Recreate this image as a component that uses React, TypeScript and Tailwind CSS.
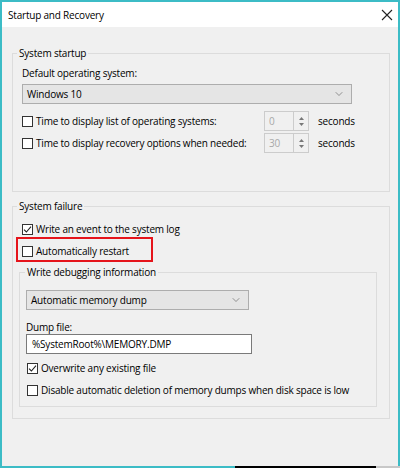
import { ChevronDown } from "lucide-react";

function Box({ checked }: { checked?: boolean }) {
  return (
    <span className="w-[11px] h-[11px] border border-[#333] bg-white flex items-center justify-center shrink-0">
      {checked && (
        <svg width="9" height="9" viewBox="0 0 9 9">
          <path d="M1 4.6 L3.4 7 L8 1.6" fill="none" stroke="#222" strokeWidth="1.1" />
        </svg>
      )}
    </span>
  );
}

function Check({ label, checked }: { label: string; checked?: boolean }) {
  return (
    <div className="h-[18px] flex items-center gap-[3px]">
      <Box checked={checked} />
      <span>{label}</span>
    </div>
  );
}

function Select({ value, width }: { value: string; width: string }) {
  return (
    <div className={`${width} h-[20px] bg-[#e5e5e5] border border-[#adadad] flex items-center justify-between pl-[4px] pr-[6px]`}>
      <span>{value}</span>
      <ChevronDown size={12} strokeWidth={1.2} className="text-[#555]" />
    </div>
  );
}

function Spinner({ value }: { value: string }) {
  return (
    <div className="w-[45px] h-[20px] border border-[#cccccc] bg-[#f0f0f0] flex">
      <span className="flex-1 pl-[4px] flex items-center text-[#a8a8a8]">{value}</span>
      <span className="w-[15px] border-l border-[#cccccc] flex flex-col items-center justify-center gap-[3px]">
        <svg width="5" height="3" viewBox="0 0 5 3"><path d="M0 3 L2.5 0 L5 3Z" fill="#777" /></svg>
        <svg width="5" height="3" viewBox="0 0 5 3"><path d="M0 0 L2.5 3 L5 0Z" fill="#777" /></svg>
      </span>
    </div>
  );
}

function SpinRow({ label, value }: { label: string; value: string }) {
  return (
    <div className="h-[20px] flex items-center">
      <div className="w-[242px] flex items-center gap-[3px]">
        <Box />
        <span>{label}</span>
      </div>
      <Spinner value={value} />
      <span className="ml-[9px]">seconds</span>
    </div>
  );
}

export default function App() {
  return (
    <div
      className="w-[400px] h-[468px] bg-[#f0f0f0] border-2 border-b-0 border-[#3cbcc6] flex flex-col text-[10px] tracking-[-0.2px] leading-[14px] text-black"
      style={{ fontFamily: '"Open Sans", "Noto Sans", sans-serif' }}
    >
      {/* Title bar */}
      <div className="h-[25px] bg-white flex items-center justify-between pl-[6px] pr-[5px] shrink-0">
        <span className="text-[10px]">Startup and Recovery</span>
        <svg width="12" height="12" viewBox="0 0 12 12">
          <path d="M1 1 L11 11 M11 1 L1 11" stroke="#222" strokeWidth="1.1" />
        </svg>
      </div>

      <div className="flex-1 pl-[10px] pr-[8px]">
        {/* System startup */}
        <fieldset className="mt-[19px] border border-[#dcdcdc] p-0">
          <legend className="ml-[4px] px-[2px]">System startup</legend>
          <div className="pl-[9px] pb-[38px]">
            <div className="mt-[6px]">Default operating system:</div>
            <div className="mt-[4px]">
              <Select value="Windows 10" width="w-[330px]" />
            </div>
            <div className="mt-[7px]">
              <SpinRow label="Time to display list of operating systems:" value="0" />
            </div>
            <div className="mt-[2px]">
              <SpinRow label="Time to display recovery options when needed:" value="30" />
            </div>
          </div>
        </fieldset>

        {/* System failure */}
        <fieldset className="mt-[7px] border border-[#dcdcdc] p-0">
          <legend className="ml-[4px] px-[2px]">System failure</legend>
          <div className="pl-[9px] pr-[12px] pb-[11px]">
            <div className="mt-[7px]">
              <Check label="Write an event to the system log" checked />
            </div>
            <div className="-ml-[6px] -mt-[1px] w-[137px] h-[25px] border-2 border-[#e5141b] pl-[4px] pt-[3px]">
              <Check label="Automatically restart" />
            </div>

            <fieldset className="mt-[3px] -ml-[3px] border border-[#dcdcdc] p-0">
              <legend className="ml-[5px] px-[2px]">Write debugging information</legend>
              <div className="pl-[6px] pb-[7px]">
                <div className="mt-[11px]">
                  <Select value="Automatic memory dump" width="w-[223px]" />
                </div>
                <div className="mt-[10px]">Dump file:</div>
                <div className="w-[226px] h-[20px] bg-white border border-[#7a7a7a] flex items-center pl-[5px]">
                  %SystemRoot%\MEMORY.DMP
                </div>
                <div className="mt-[5px] ml-[1px]">
                  <Check label="Overwrite any existing file" checked />
                </div>
                <div className="mt-[4px] ml-[1px]">
                  <Check label="Disable automatic deletion of memory dumps when disk space is low" />
                </div>
              </div>
            </fieldset>
          </div>
        </fieldset>
      </div>

      {/* bottom edge */}
      <div className="h-[2px] flex -mx-[2px] shrink-0">
        <div className="w-[235px] bg-[#3cbcc6]" />
        <div className="w-[141px] bg-black" />
        <div className="flex-1 bg-[#c8c8c8]" />
      </div>
    </div>
  );
}
